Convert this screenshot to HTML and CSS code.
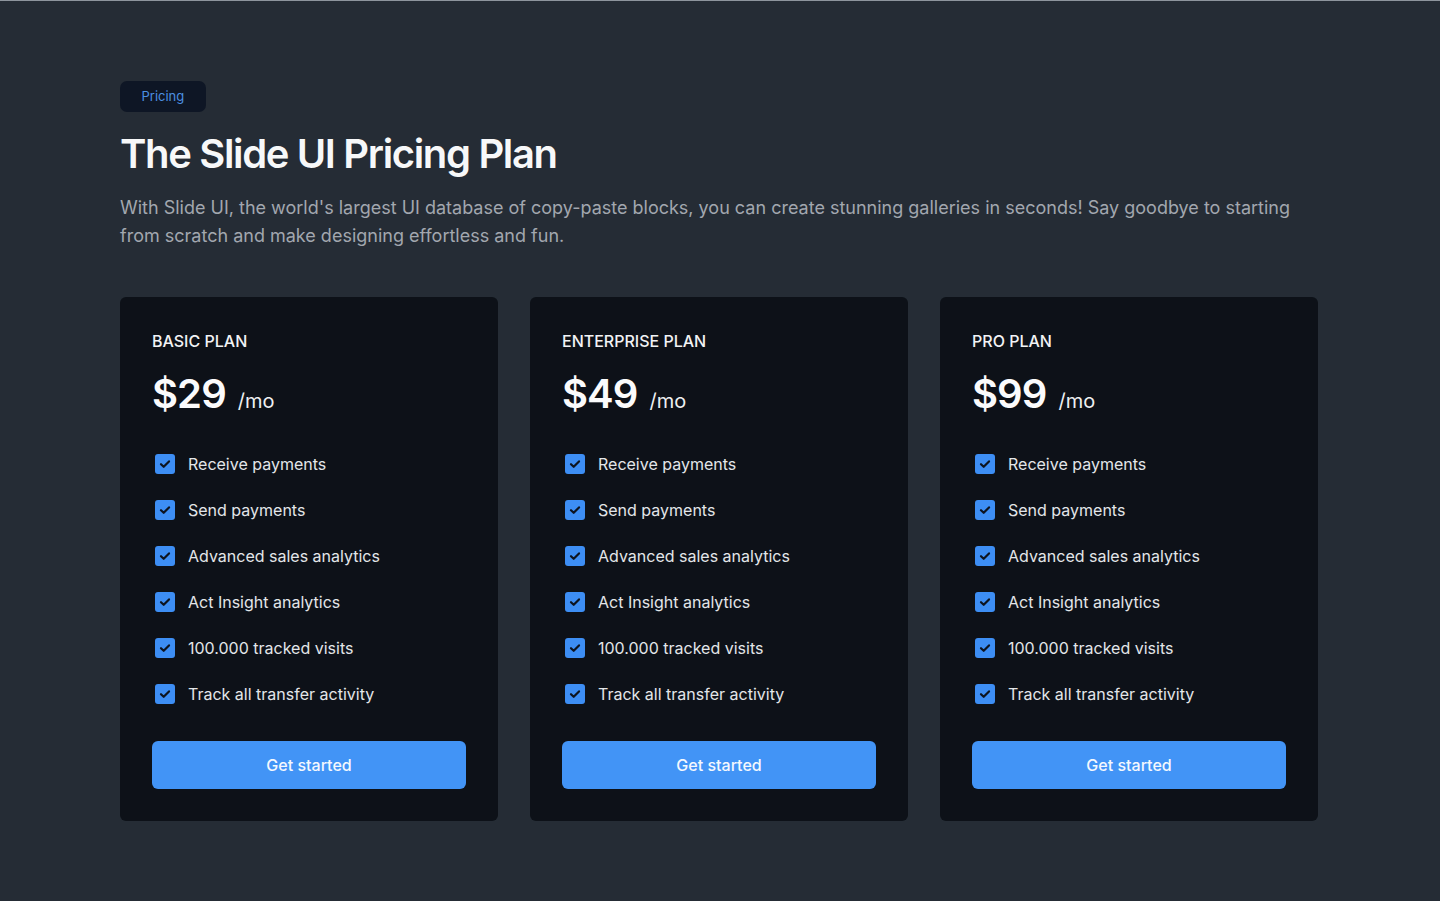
FILE: index.html
```html
<!DOCTYPE html>
<html lang="en">
<head>
<meta charset="utf-8">
<title>Pricing</title>
<link rel="stylesheet" href="styles.css">
</head>
<body>
<main class="page">
  <header class="intro">
    <span class="badge">Pricing</span>
    <h1 class="title">The Slide UI Pricing Plan</h1>
    <p class="lead">With Slide UI, the world's largest UI database of copy-paste blocks, you can create stunning galleries in seconds! Say goodbye to starting from scratch and make designing effortless and fun.</p>
  </header>
  <section class="plans">
    <article class="card">
      <h2 class="plan-name">BASIC PLAN</h2>
      <div class="price"><span class="amount">$29</span><span class="per">/mo</span></div>
      <ul class="features">
        <li><span class="check"><svg viewBox="0 0 20 20" width="20" height="20"><rect width="20" height="20" rx="3" fill="#3d8ef4"/><path d="M6 10.2l2.7 2.6L14 7.4" fill="none" stroke="#0d1420" stroke-width="2.2" stroke-linecap="round" stroke-linejoin="round"/></svg></span>Receive payments</li>
        <li><span class="check"><svg viewBox="0 0 20 20" width="20" height="20"><rect width="20" height="20" rx="3" fill="#3d8ef4"/><path d="M6 10.2l2.7 2.6L14 7.4" fill="none" stroke="#0d1420" stroke-width="2.2" stroke-linecap="round" stroke-linejoin="round"/></svg></span>Send payments</li>
        <li><span class="check"><svg viewBox="0 0 20 20" width="20" height="20"><rect width="20" height="20" rx="3" fill="#3d8ef4"/><path d="M6 10.2l2.7 2.6L14 7.4" fill="none" stroke="#0d1420" stroke-width="2.2" stroke-linecap="round" stroke-linejoin="round"/></svg></span>Advanced sales analytics</li>
        <li><span class="check"><svg viewBox="0 0 20 20" width="20" height="20"><rect width="20" height="20" rx="3" fill="#3d8ef4"/><path d="M6 10.2l2.7 2.6L14 7.4" fill="none" stroke="#0d1420" stroke-width="2.2" stroke-linecap="round" stroke-linejoin="round"/></svg></span>Act Insight analytics</li>
        <li><span class="check"><svg viewBox="0 0 20 20" width="20" height="20"><rect width="20" height="20" rx="3" fill="#3d8ef4"/><path d="M6 10.2l2.7 2.6L14 7.4" fill="none" stroke="#0d1420" stroke-width="2.2" stroke-linecap="round" stroke-linejoin="round"/></svg></span>100.000 tracked visits</li>
        <li><span class="check"><svg viewBox="0 0 20 20" width="20" height="20"><rect width="20" height="20" rx="3" fill="#3d8ef4"/><path d="M6 10.2l2.7 2.6L14 7.4" fill="none" stroke="#0d1420" stroke-width="2.2" stroke-linecap="round" stroke-linejoin="round"/></svg></span>Track all transfer activity</li>
      </ul>
      <button class="cta" type="button">Get started</button>
    </article>
    <article class="card">
      <h2 class="plan-name">ENTERPRISE PLAN</h2>
      <div class="price"><span class="amount">$49</span><span class="per">/mo</span></div>
      <ul class="features">
        <li><span class="check"><svg viewBox="0 0 20 20" width="20" height="20"><rect width="20" height="20" rx="3" fill="#3d8ef4"/><path d="M6 10.2l2.7 2.6L14 7.4" fill="none" stroke="#0d1420" stroke-width="2.2" stroke-linecap="round" stroke-linejoin="round"/></svg></span>Receive payments</li>
        <li><span class="check"><svg viewBox="0 0 20 20" width="20" height="20"><rect width="20" height="20" rx="3" fill="#3d8ef4"/><path d="M6 10.2l2.7 2.6L14 7.4" fill="none" stroke="#0d1420" stroke-width="2.2" stroke-linecap="round" stroke-linejoin="round"/></svg></span>Send payments</li>
        <li><span class="check"><svg viewBox="0 0 20 20" width="20" height="20"><rect width="20" height="20" rx="3" fill="#3d8ef4"/><path d="M6 10.2l2.7 2.6L14 7.4" fill="none" stroke="#0d1420" stroke-width="2.2" stroke-linecap="round" stroke-linejoin="round"/></svg></span>Advanced sales analytics</li>
        <li><span class="check"><svg viewBox="0 0 20 20" width="20" height="20"><rect width="20" height="20" rx="3" fill="#3d8ef4"/><path d="M6 10.2l2.7 2.6L14 7.4" fill="none" stroke="#0d1420" stroke-width="2.2" stroke-linecap="round" stroke-linejoin="round"/></svg></span>Act Insight analytics</li>
        <li><span class="check"><svg viewBox="0 0 20 20" width="20" height="20"><rect width="20" height="20" rx="3" fill="#3d8ef4"/><path d="M6 10.2l2.7 2.6L14 7.4" fill="none" stroke="#0d1420" stroke-width="2.2" stroke-linecap="round" stroke-linejoin="round"/></svg></span>100.000 tracked visits</li>
        <li><span class="check"><svg viewBox="0 0 20 20" width="20" height="20"><rect width="20" height="20" rx="3" fill="#3d8ef4"/><path d="M6 10.2l2.7 2.6L14 7.4" fill="none" stroke="#0d1420" stroke-width="2.2" stroke-linecap="round" stroke-linejoin="round"/></svg></span>Track all transfer activity</li>
      </ul>
      <button class="cta" type="button">Get started</button>
    </article>
    <article class="card">
      <h2 class="plan-name">PRO PLAN</h2>
      <div class="price"><span class="amount">$99</span><span class="per">/mo</span></div>
      <ul class="features">
        <li><span class="check"><svg viewBox="0 0 20 20" width="20" height="20"><rect width="20" height="20" rx="3" fill="#3d8ef4"/><path d="M6 10.2l2.7 2.6L14 7.4" fill="none" stroke="#0d1420" stroke-width="2.2" stroke-linecap="round" stroke-linejoin="round"/></svg></span>Receive payments</li>
        <li><span class="check"><svg viewBox="0 0 20 20" width="20" height="20"><rect width="20" height="20" rx="3" fill="#3d8ef4"/><path d="M6 10.2l2.7 2.6L14 7.4" fill="none" stroke="#0d1420" stroke-width="2.2" stroke-linecap="round" stroke-linejoin="round"/></svg></span>Send payments</li>
        <li><span class="check"><svg viewBox="0 0 20 20" width="20" height="20"><rect width="20" height="20" rx="3" fill="#3d8ef4"/><path d="M6 10.2l2.7 2.6L14 7.4" fill="none" stroke="#0d1420" stroke-width="2.2" stroke-linecap="round" stroke-linejoin="round"/></svg></span>Advanced sales analytics</li>
        <li><span class="check"><svg viewBox="0 0 20 20" width="20" height="20"><rect width="20" height="20" rx="3" fill="#3d8ef4"/><path d="M6 10.2l2.7 2.6L14 7.4" fill="none" stroke="#0d1420" stroke-width="2.2" stroke-linecap="round" stroke-linejoin="round"/></svg></span>Act Insight analytics</li>
        <li><span class="check"><svg viewBox="0 0 20 20" width="20" height="20"><rect width="20" height="20" rx="3" fill="#3d8ef4"/><path d="M6 10.2l2.7 2.6L14 7.4" fill="none" stroke="#0d1420" stroke-width="2.2" stroke-linecap="round" stroke-linejoin="round"/></svg></span>100.000 tracked visits</li>
        <li><span class="check"><svg viewBox="0 0 20 20" width="20" height="20"><rect width="20" height="20" rx="3" fill="#3d8ef4"/><path d="M6 10.2l2.7 2.6L14 7.4" fill="none" stroke="#0d1420" stroke-width="2.2" stroke-linecap="round" stroke-linejoin="round"/></svg></span>Track all transfer activity</li>
      </ul>
      <button class="cta" type="button">Get started</button>
    </article>
  </section>
</main>
</body>
</html>
```

FILE: styles.css
```css
* { box-sizing: border-box; }
html, body { margin: 0; padding: 0; }
body {
  background: #252c35;
  border-top: 1px solid #8e959d;
  min-height: 901px;
  font-family: Inter, "Noto Sans", sans-serif;
  color: #e6e8eb;
}
.page {
  padding: 80px 120px 0 120px;
}
.intro {
  display: flex;
  flex-direction: column;
  align-items: flex-start;
}
.badge {
  display: inline-block;
  background: #0e1625;
  color: #4b8fe2;
  font-size: 13px;
  line-height: 19px;
  padding: 6px 21.5px;
  border-radius: 7px;
}
.title {
  margin: 18px 0 0 0;
  font-size: 40px;
  line-height: 48px;
  font-weight: 600;
  letter-spacing: -1.35px;
  color: #f7f8f9;
}
.lead {
  margin: 16px 0 0 0;
  max-width: 1200px;
  font-size: 18px;
  line-height: 28px;
  color: #a2a7af;
}
.plans {
  margin-top: 47px;
  display: grid;
  grid-template-columns: repeat(3, 378px);
  gap: 32px;
}
.card {
  background: #0d1118;
  border-radius: 6px;
  padding: 32px;
  display: flex;
  flex-direction: column;
}
.plan-name {
  margin: 0;
  font-size: 16px;
  line-height: 24px;
  font-weight: 500;
  color: #f2f3f5;
}
.price {
  margin-top: 17px;
  display: flex;
  align-items: baseline;
  height: 48px;
}
.amount {
  font-size: 40px;
  line-height: 48px;
  font-weight: 600;
  color: #fbfbfc;
  letter-spacing: -0.9px;
}
.per {
  margin-left: 12px;
  font-size: 20px;
  color: #eef0f2;
}
.features {
  list-style: none;
  margin: 34px 0 0 0;
  padding: 0;
  display: flex;
  flex-direction: column;
  gap: 22px;
}
.features li {
  display: flex;
  align-items: center;
  font-size: 16px;
  line-height: 24px;
  color: #e3e6e9;
}
.check {
  display: flex;
  width: 20px;
  height: 20px;
  margin-left: 3px;
  margin-right: 13px;
}
.cta {
  margin-top: 35px;
  height: 48px;
  border: 0;
  border-radius: 6px;
  background: #4294f6;
  color: #f4f8fe;
  font-family: inherit;
  font-size: 16px;
  font-weight: 500;
  cursor: pointer;
}
```
